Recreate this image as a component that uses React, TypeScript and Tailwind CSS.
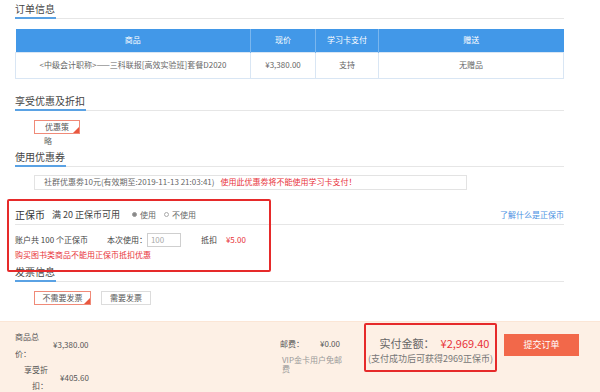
import React from 'react';

const font = { fontFamily: '"Noto Sans CJK SC", "Liberation Sans", sans-serif' };

function SectionTitle({ title }: { title: string }) {
  return (
    <div className="border-b border-[#e6e6e6] flex">
      <span className="whitespace-nowrap text-[10px] leading-[13px] text-[#444] pb-[2px] pr-[1px] border-b-2 border-[#5aa2e4] -mb-px">
        {title}
      </span>
    </div>
  );
}

function PickButton({ label, active, className = '' }: { label: string; active?: boolean; className?: string }) {
  return (
    <div
      className={`relative h-[14px] flex items-center justify-center text-[8px] leading-[10px] text-[#555] whitespace-nowrap ${
        active ? 'border border-[#f08a78]' : 'border border-[#dcdcdc]'
      } ${className}`}
    >
      {label}
      {active && (
        <span className="absolute right-0 bottom-0 w-0 h-0 border-l-[6px] border-l-transparent border-b-[6px] border-b-[#e9573f]" />
      )}
    </div>
  );
}

export default function App() {
  return (
    <div className="relative w-[600px] h-[392px] bg-white overflow-hidden text-[#555]" style={font}>
      <div className="px-[15px] pt-[2px] w-[579px]">
        {/* 订单信息 */}
        <SectionTitle title="订单信息" />
        <table className="mt-[10px] w-full border-collapse text-[8px] leading-[10px]">
          <thead>
            <tr className="bg-[#4298e8] text-white h-[23px]">
              <th className="font-normal w-[235px] border-r border-[#7ab6ee]">商品</th>
              <th className="font-normal w-[65px] border-r border-[#7ab6ee]">现价</th>
              <th className="font-normal w-[63px] border-r border-[#7ab6ee]">学习卡支付</th>
              <th className="font-normal">赠送</th>
            </tr>
          </thead>
          <tbody>
            <tr className="h-[26px] text-[#666] text-center">
              <td className="border border-[#d9e6f4]">&lt;中级会计职称&gt;——三科联报[高效实验班]套餐D2020</td>
              <td className="border border-[#d9e6f4]">¥3,380.00</td>
              <td className="border border-[#d9e6f4]">支持</td>
              <td className="border border-[#d9e6f4]">无赠品</td>
            </tr>
          </tbody>
        </table>

        {/* 享受优惠及折扣 */}
        <div className="mt-[15px]">
          <SectionTitle title="享受优惠及折扣" />
        </div>
        <div className="pl-[19px] pt-[9px]">
          <div className="w-[46px] flex flex-col">
            <PickButton label="优惠策" active className="w-[46px]" />
            <span className="text-[8px] leading-[11px] text-[#666] mt-[1px] pl-[10px]">略</span>
          </div>
        </div>

        {/* 使用优惠券 */}
        <div className="mt-[4px]">
          <SectionTitle title="使用优惠券" />
        </div>
        <div className="pl-[19px] pt-[8px]">
          <div className="w-[433px] h-[15px] border border-[#e3e3e3] flex items-center pl-[9px] text-[8px] leading-[10px] whitespace-nowrap">
            <span className="text-[#666]">社群优惠劵10元(有效期至:2019-11-13 21:03:41)</span>
            <span className="ml-[6px] text-[#e8333a]">使用此优惠劵将不能使用学习卡支付！</span>
          </div>
        </div>

        {/* 正保币 */}
        <div className="mt-[18px] border-b border-[#e6e6e6] flex items-center h-[17px] pb-[2px] whitespace-nowrap">
          <span className="text-[10px] leading-[13px] text-[#333]">正保币</span>
          <span className="ml-[7px] text-[9px] leading-[13px] text-[#444]">满 20 正保币可用</span>
          <span className="ml-[12px] flex items-center text-[8px] leading-[13px] text-[#666]">
            <span className="w-[5px] h-[5px] rounded-full border border-[#999] bg-[#888] mr-[3px]" />
            使用
          </span>
          <span className="ml-[8px] flex items-center text-[8px] leading-[13px] text-[#666]">
            <span className="w-[5px] h-[5px] rounded-full border border-[#aaa] bg-white mr-[3px]" />
            不使用
          </span>
          <span className="ml-auto text-[8px] leading-[13px] text-[#4a90e2]">了解什么是正保币</span>
        </div>
        <div className="flex items-center h-[16px] mt-[7px] text-[8px] leading-[10px] text-[#444] whitespace-nowrap">
          <span>账户共 100 个正保币</span>
          <span className="ml-[19px]">本次使用：</span>
          <span className="w-[34px] h-[14px] border border-[#cfcfcf] text-[#aaa] pl-[3px] flex items-center">100</span>
          <span className="ml-[20px]">抵扣</span>
          <span className="ml-[9px] text-[#e8333a]">¥5.00</span>
        </div>
        <div className="text-[8px] leading-[12px] text-[#e8333a] mt-[1px]">购买图书类商品不能用正保币抵扣优惠</div>

        {/* 发票信息 */}
        <div className="mt-[4px]">
          <SectionTitle title="发票信息" />
        </div>
        <div className="flex gap-[10px] pl-[19px] pt-[9px]">
          <PickButton label="不需要发票" active className="w-[57px]" />
          <PickButton label="需要发票" className="w-[50px]" />
        </div>
      </div>

      {/* 结算栏 */}
      <div className="absolute left-0 right-0 bottom-0 h-[71px] bg-[#fdf0e5] border-t border-[#fbe6d6]">
        <div className="flex h-full">
          <div className="pl-[15px] pt-[6px] w-[200px] shrink-0">
            <div className="flex items-center h-[34px]">
              <span className="w-[26px] text-[8px] leading-[17px] text-[#555]">商品总价：</span>
              <span className="ml-[12px] text-[8px] leading-[10px] text-[#555]">¥3,380.00</span>
            </div>
            <div className="flex items-center h-[32px]">
              <span className="w-[33px] text-right text-[8px] leading-[16px] text-[#555] [text-align-last:right]">享受折扣：</span>
              <span className="ml-[12px] text-[8px] leading-[10px] text-[#555]">¥405.60</span>
            </div>
          </div>
          <div className="ml-[80px] pt-[15px] w-[80px] shrink-0">
            <div className="flex text-[8px] leading-[10px] text-[#555] h-[14px] items-center">
              <span>邮费：</span>
              <span className="ml-[16px]">¥0.00</span>
            </div>
            <div className="mt-[4px] w-[64px] pl-[2px] text-[8px] leading-[9px] text-[#999]">VIP金卡用户免邮费</div>
          </div>
          <div className="ml-[4px] w-[133px] pt-[13px] flex flex-col items-center shrink-0">
            <div className="flex items-baseline whitespace-nowrap pl-[8px]">
              <span className="text-[11px] leading-[16px] text-[#666]">实付金额：</span>
              <span className="ml-[6px] text-[11px] leading-[16px] text-[#e8333a]">¥2,969.40</span>
            </div>
            <div className="text-[9px] leading-[12px] text-[#777] mt-[2px] whitespace-nowrap">(支付成功后可获得2969正保币)</div>
          </div>
          <div className="ml-[7px] pt-[12px]">
            <div className="w-[75px] h-[22px] bg-[#f2684a] text-white text-[9px] leading-[10px] flex items-center justify-center">提交订单</div>
          </div>
        </div>
      </div>

      {/* 标注框 */}
      <div className="absolute left-[7px] top-[199px] w-[264px] h-[73px] border-2 border-[#e62a2a] rounded-[2px] pointer-events-none" />
      <div className="absolute left-[364px] top-[323px] w-[133px] h-[49px] border-2 border-[#e62a2a] rounded-[2px] pointer-events-none" />
    </div>
  );
}
